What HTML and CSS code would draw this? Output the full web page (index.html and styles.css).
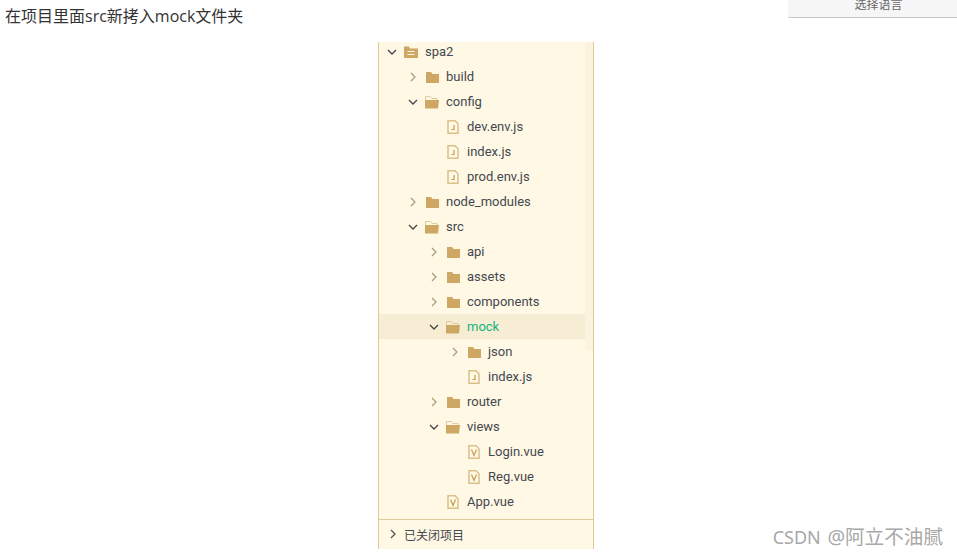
FILE: index.html
```html
<!DOCTYPE html>
<html lang="zh-CN">
<head>
    <meta charset="UTF-8">
    <title>在项目里面src新拷入mock文件夹</title>
    <link rel="stylesheet" href="styles.css">
</head>
<body>
    <svg class="defs" width="0" height="0">
        <symbol id="arrow-right" viewBox="0 0 10 10"><path d="M3 1l4 4-4 4" fill="none" stroke="#a89a80" stroke-width="1.2"/></symbol>
        <symbol id="arrow-right-dark" viewBox="0 0 10 10"><path d="M3 1l4 4-4 4" fill="none" stroke="#555" stroke-width="1.3"/></symbol>
        <symbol id="arrow-down" viewBox="0 0 10 10"><path d="M1 3l4 4 4-4" fill="none" stroke="#444" stroke-width="1.3"/></symbol>
        <symbol id="folder" viewBox="0 0 14 14"><path d="M1 2h5l1.500 2H14v9H1z" fill="#cda763"/></symbol>
        <symbol id="folder-open" viewBox="0 0 14 14"><path d="M.5 10V1.500h5l1.500 2h5V5" fill="none" stroke="#e0cb9f"/><path d="M0 13.500V5h14l-1 8.500z" fill="#cda763"/></symbol>
        <symbol id="project" viewBox="0 0 14 14"><path d="M0 1.500h5l1 2h8v9.500H0z" fill="#cda763"/><path d="M3.500 6.500h7M3.500 9.500h7" stroke="#fef8e5" stroke-width="1.200"/></symbol>
        <symbol id="file-js" viewBox="0 0 12 14"><path d="M1 .8h7l3 3v9.400H1z" fill="none" stroke="#dcc08a" stroke-width="1.500"/><path d="M7 5v4.500H4.500" fill="none" stroke="#c39c50" stroke-width="1.200"/></symbol>
        <symbol id="file-vue" viewBox="0 0 12 14"><path d="M1 .8h7l3 3v9.400H1z" fill="none" stroke="#dcc08a" stroke-width="1.500"/><path d="M3.500 4.500L6 10.500l2.500-6" fill="none" stroke="#c39c50" stroke-width="1.200"/></symbol>
    </svg>

    <p class="title">在项目里面src新拷入mock文件夹</p>
    <div class="lang-btn">选择语言</div>

    <div class="panel">
        <div class="tree">
            <div class="row d0"><span class="arrow"><svg><use href="#arrow-down"/></svg></span><span class="icon"><svg><use href="#project"/></svg></span>spa2</div>
            <div class="row d1"><span class="arrow"><svg><use href="#arrow-right"/></svg></span><span class="icon"><svg><use href="#folder"/></svg></span>build</div>
            <div class="row d1"><span class="arrow"><svg><use href="#arrow-down"/></svg></span><span class="icon"><svg><use href="#folder-open"/></svg></span>config</div>
            <div class="row d2"><span class="arrow"></span><span class="icon"><svg class="file"><use href="#file-js"/></svg></span>dev.env.js</div>
            <div class="row d2"><span class="arrow"></span><span class="icon"><svg class="file"><use href="#file-js"/></svg></span>index.js</div>
            <div class="row d2"><span class="arrow"></span><span class="icon"><svg class="file"><use href="#file-js"/></svg></span>prod.env.js</div>
            <div class="row d1"><span class="arrow"><svg><use href="#arrow-right"/></svg></span><span class="icon"><svg><use href="#folder"/></svg></span>node_modules</div>
            <div class="row d1"><span class="arrow"><svg><use href="#arrow-down"/></svg></span><span class="icon"><svg><use href="#folder-open"/></svg></span>src</div>
            <div class="row d2"><span class="arrow"><svg><use href="#arrow-right"/></svg></span><span class="icon"><svg><use href="#folder"/></svg></span>api</div>
            <div class="row d2"><span class="arrow"><svg><use href="#arrow-right"/></svg></span><span class="icon"><svg><use href="#folder"/></svg></span>assets</div>
            <div class="row d2"><span class="arrow"><svg><use href="#arrow-right"/></svg></span><span class="icon"><svg><use href="#folder"/></svg></span>components</div>
            <div class="row d2 active"><span class="arrow"><svg><use href="#arrow-down"/></svg></span><span class="icon"><svg><use href="#folder-open"/></svg></span>mock</div>
            <div class="row d3"><span class="arrow"><svg><use href="#arrow-right"/></svg></span><span class="icon"><svg><use href="#folder"/></svg></span>json</div>
            <div class="row d3"><span class="arrow"></span><span class="icon"><svg class="file"><use href="#file-js"/></svg></span>index.js</div>
            <div class="row d2"><span class="arrow"><svg><use href="#arrow-right"/></svg></span><span class="icon"><svg><use href="#folder"/></svg></span>router</div>
            <div class="row d2"><span class="arrow"><svg><use href="#arrow-down"/></svg></span><span class="icon"><svg><use href="#folder-open"/></svg></span>views</div>
            <div class="row d3"><span class="arrow"></span><span class="icon"><svg class="file"><use href="#file-vue"/></svg></span>Login.vue</div>
            <div class="row d3"><span class="arrow"></span><span class="icon"><svg class="file"><use href="#file-vue"/></svg></span>Reg.vue</div>
            <div class="row d2"><span class="arrow"></span><span class="icon"><svg class="file"><use href="#file-vue"/></svg></span>App.vue</div>
        </div>
        <div class="scrollbar"></div>
        <div class="border-gap"></div>
        <div class="closed"><span class="closed-arrow"><svg><use href="#arrow-right-dark"/></svg></span>已关闭项目</div>
    </div>

    <div class="watermark">CSDN <span class="watermark-name">@阿立不油腻</span></div>
</body>
</html>
```

FILE: styles.css
```css
body {
    margin: 0;
    background-color: #fff;
    font-family: "Roboto", "Noto Sans CJK SC", sans-serif;
    color: #333;
}
.defs {
    position: absolute;
}
.title {
    margin: 0;
    height: 42px;
    padding-left: 5px;
    font-size: 16px;
    line-height: 33px;
    font-family: "Open Sans", "Noto Sans CJK SC", sans-serif;
    color: #333;
}
.lang-btn {
    position: absolute;
    top: 0;
    left: 788px;
    right: 0;
    height: 17px;
    padding-left: 12px;
    line-height: 11px;
    text-align: center;
    font-size: 12px;
    color: #666;
    background-color: #f6f6f6;
    border-bottom: 1px solid #c4c8c4;
    border-bottom-left-radius: 2px;
}
.panel {
    position: relative;
    width: 214px;
    height: 507px;
    margin-left: 378px;
    background-color: #fff8e5;
    border-left: 1px solid #dfc998;
    border-right: 1px solid #dfc998;
    overflow: hidden;
}
.tree {
    height: 480px;
    margin-top: -3px;
    font-size: 13px;
    color: #44484f;
}
.row {
    display: flex;
    align-items: center;
    height: 25px;
    white-space: nowrap;
}
.d0 { padding-left: 3px; }
.d1 { padding-left: 24px; }
.d2 { padding-left: 45px; }
.d3 { padding-left: 66px; }
.arrow {
    display: flex;
    justify-content: center;
    flex: none;
    width: 20px;
}
.arrow svg {
    width: 10px;
    height: 10px;
}
.icon {
    display: flex;
    flex: none;
    width: 21px;
    margin-left: 2px;
}
.icon svg {
    width: 14px;
    height: 14px;
}
.icon svg.file {
    width: 12px;
    margin-left: 1px;
}
.active {
    width: 206px;
    background-color: #f6edd4;
    color: #17b37d;
}
.scrollbar {
    position: absolute;
    top: 0;
    right: 0;
    width: 8px;
    height: 308px;
    background-color: #fbf3dd;
}
.border-gap {
    position: absolute;
    top: 214px;
    right: -1px;
    width: 1px;
    height: 33px;
    background-color: #fff;
}
.closed {
    display: flex;
    align-items: center;
    height: 28px;
    border-top: 1px solid #dfc998;
    font-size: 12px;
    color: #44484f;
}
.closed-arrow {
    display: flex;
    justify-content: center;
    width: 25px;
    padding-left: 1px;
    margin-right: -1px;
}
.closed-arrow svg {
    width: 10px;
    height: 10px;
}
.watermark {
    position: absolute;
    right: 14px;
    top: 525px;
    font-family: "Noto Sans", "Noto Sans CJK SC", sans-serif;
    font-size: 18px;
    line-height: 24px;
    word-spacing: 2px;
    color: #a8a8a8;
}
.watermark-name {
    font-size: 19.6px;
}
```
